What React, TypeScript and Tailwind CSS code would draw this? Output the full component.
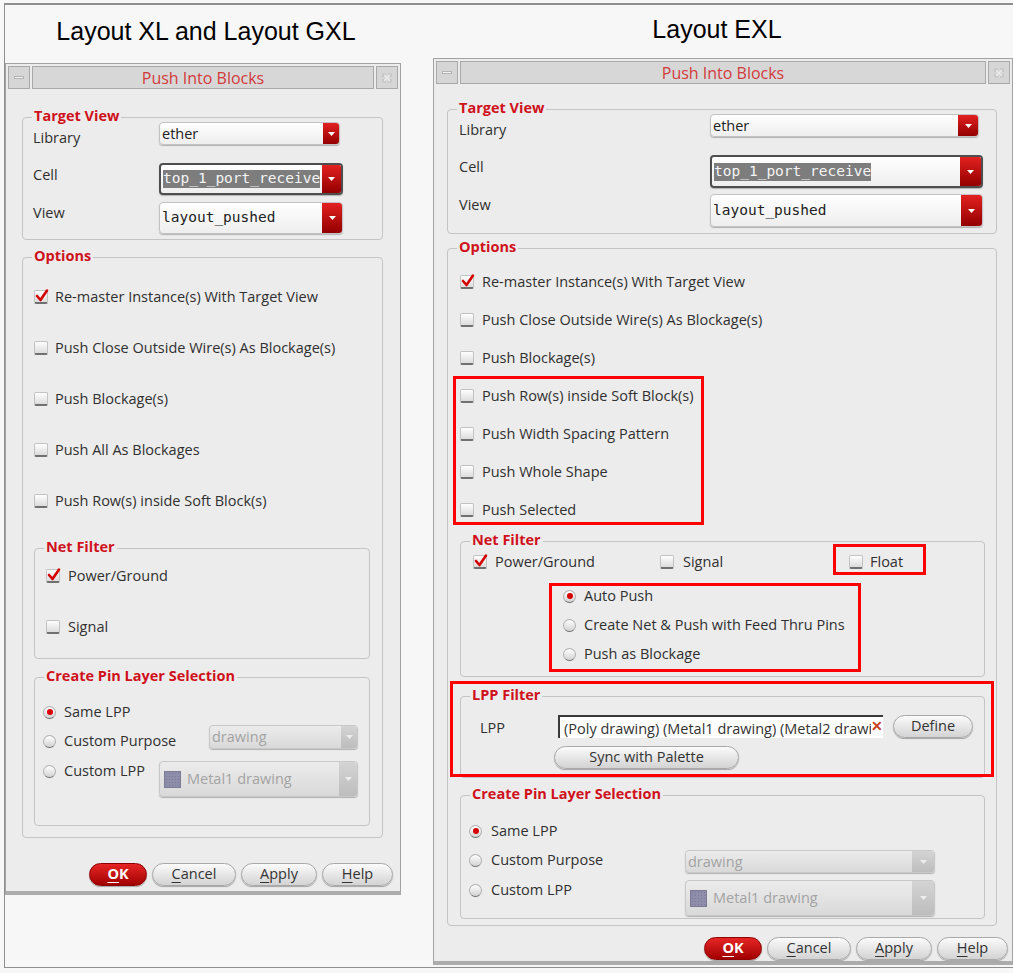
import React from "react";

type Kids = { children?: React.ReactNode };

function Check({ checked = false }: { checked?: boolean }) {
  return (
    <span className="relative block w-[14px] h-[14px] shrink-0 rounded-[2px] border border-[#c2c2c2] border-b-[2px] border-b-[#707070] bg-linear-to-b from-[#fefefe] to-[#dcdcdc]">
      {checked && (
        <svg className="absolute left-[0px] top-[-3px]" width="14" height="15" viewBox="0 0 14 15">
          <path d="M2 8 L5.5 12 L12 2.5" stroke="#d40000" strokeWidth="2.6" fill="none" strokeLinejoin="round" strokeLinecap="round" />
        </svg>
      )}
    </span>
  );
}

function Radio({ on = false }: { on?: boolean }) {
  return (
    <span className="flex w-[13px] h-[13px] shrink-0 rounded-full items-center justify-center border border-[#b0b0b0] border-b-[#6c6c6c] bg-linear-to-b from-white to-[#d2d2d2]">
      {on && <span className="block w-[6px] h-[6px] rounded-full bg-[#d60000]" />}
    </span>
  );
}

function CheckRow({ label, checked = false, gap = "gap-[7px]" }: { label: string; checked?: boolean; gap?: string }) {
  return (
    <div className={`h-[20px] flex items-center ${gap}`}>
      <Check checked={checked} />
      <span className="text-[14.5px] leading-[20px] whitespace-nowrap">{label}</span>
    </div>
  );
}

function RadioRow({ label, on = false, gap = "gap-[8px]" }: { label: string; on?: boolean; gap?: string }) {
  return (
    <div className={`h-[20px] flex items-center ${gap}`}>
      <Radio on={on} />
      <span className="text-[14.5px] leading-[20px] whitespace-nowrap">{label}</span>
    </div>
  );
}

function Arrow({ disabled = false }: { disabled?: boolean }) {
  return (
    <svg width="7" height="4" viewBox="0 0 7 4">
      <path d="M0 0 H7 L3.5 4 Z" fill={disabled ? "#ededed" : "#ffffff"} />
    </svg>
  );
}

function Combo({
  cls,
  btn = "w-[18px]",
  focused = false,
  disabled = false,
  children,
}: {
  cls: string;
  btn?: string;
  focused?: boolean;
  disabled?: boolean;
} & Kids) {
  const border = focused
    ? "border-2 border-[#4e4e4e]"
    : disabled
    ? "border border-[#c8c8c8]"
    : "border border-[#c2c2c2]";
  const bg = disabled ? "bg-linear-to-b from-[#ececec] to-[#d9d9d9]" : "bg-linear-to-b from-white to-[#eeeeee]";
  return (
    <div className={`${cls} ${border} ${bg} shrink-0 flex rounded-[4px] overflow-hidden shadow-[0_1px_1px_rgba(0,0,0,0.25)]`}>
      <div className="flex-1 min-w-0 flex items-center pl-[2px] overflow-hidden whitespace-nowrap">{children}</div>
      <div
        className={`${btn} shrink-0 flex items-center justify-center ${
          disabled ? "bg-linear-to-b from-[#d4d4d4] to-[#bdbdbd]" : "bg-linear-to-b from-[#e42020] to-[#930000]"
        }`}
      >
        <Arrow disabled={disabled} />
      </div>
    </div>
  );
}

function Group({ title, className = "", children }: { title: string; className?: string } & Kids) {
  return (
    <div className={`relative border border-[#c4c4c4] rounded-[4px] ${className}`}>
      <span className="absolute -top-[11px] left-[9px] px-[2px] bg-[#ececec] text-[14.5px] leading-[18px] font-bold text-[#d0111b] whitespace-nowrap">
        {title}
      </span>
      {children}
    </div>
  );
}

function Btn({ w, primary = false, children }: { w: string; primary?: boolean } & Kids) {
  return (
    <div
      className={`${w} h-[23px] shrink-0 rounded-full flex items-center justify-center text-[14.5px] leading-none border shadow-[0_1px_1px_rgba(0,0,0,0.3)] ${
        primary
          ? "border-[#8c0000] bg-linear-to-b from-[#e62424] to-[#a20000] text-white font-bold"
          : "border-[#a8a8a8] bg-linear-to-b from-[#fbfbfb] to-[#d3d3d3] text-[#333]"
      }`}
    >
      {children}
    </div>
  );
}

function U({ children }: Kids) {
  return <span className="underline underline-offset-[3px]">{children}</span>;
}

function Buttons({ cls }: { cls: string }) {
  return (
    <div className={`flex justify-end gap-[5px] ${cls}`}>
      <Btn w="w-[58px]" primary>
        <U>O</U>K
      </Btn>
      <Btn w="w-[84px]">
        <U>C</U>ancel
      </Btn>
      <Btn w="w-[76px]">
        <U>A</U>pply
      </Btn>
      <Btn w="w-[71px]">
        <U>H</U>elp
      </Btn>
    </div>
  );
}

function TitleBar() {
  return (
    <div className="flex gap-[2px] px-[2px] pt-[2px] h-[25px]">
      <div className="w-[22px] h-[23px] border border-[#a9a9a9] bg-[#d6d6d6] flex items-center justify-center">
        <span className="block w-[10px] h-[3px] bg-[#f2f2f2] border border-[#b4b4b4]" />
      </div>
      <div className="flex-1 h-[23px] border border-[#a9a9a9] bg-[#d7d7d7] flex items-center justify-center text-[16px] leading-none text-[#d33a3c]">
        Push Into Blocks
      </div>
      <div className="w-[22px] h-[23px] border border-[#a9a9a9] bg-[#d6d6d6] flex items-center justify-center">
        <svg width="12" height="12" viewBox="0 0 12 12" fill="none" stroke="#ececec" strokeWidth="1.2">
          <path d="M2 2 L10 10 M10 2 L2 10" />
          <path d="M2 5 V2 H5 M7 2 H10 V5 M10 7 V10 H7 M5 10 H2 V7" stroke="#bdbdbd" />
        </svg>
      </div>
    </div>
  );
}

function Dialog({ className = "", bodyCls, children }: { className?: string; bodyCls: string } & Kids) {
  return (
    <div className={`border border-[#a3a3a3] border-b-[4px] border-b-[#acacac] bg-[#ececec] ${className}`}>
      <TitleBar />
      <div className={bodyCls}>{children}</div>
    </div>
  );
}

function Label({ cls, children }: { cls: string } & Kids) {
  return <span className={`${cls} relative shrink-0 h-[20px] text-[14.5px] leading-[20px]`}>{children}</span>;
}

function Mono({ sel = false, children }: { sel?: boolean } & Kids) {
  return (
    <span
      className={`inline-block h-[18px] font-['DejaVu_Sans_Mono',monospace] text-[14.5px] leading-[17px] ${
        sel ? "bg-[#7d7d7d] text-[#f4f4f4]" : "text-[#222]"
      }`}
    >
      {children}
    </span>
  );
}

function Swatch() {
  return (
    <span className="block w-[17px] h-[17px] shrink-0 mr-[6px] ml-[2px] border border-[#7a7a92] bg-[#8e8eab] bg-[radial-gradient(#7a7a98_1px,transparent_1px)] bg-[length:3px_3px]" />
  );
}

function LeftDialog() {
  return (
    <Dialog className="w-[396px]" bodyCls="pl-[16px] pr-[7px] pt-[28px] pb-[5px]">
      <Group title="Target View" className="mr-[10px] pt-[4px] pb-[5px] pl-[10px]">
        <div className="flex items-start">
          <Label cls="w-[126px] top-[6px]">Library</Label>
          <Combo cls="w-[181px] h-[23px]" btn="w-[16px]">
            <span className="text-[14.5px] text-[#222]">ether</span>
          </Combo>
        </div>
        <div className="flex items-start mt-[18px]">
          <Label cls="w-[126px] top-[2px]">Cell</Label>
          <Combo cls="w-[184px] h-[32px]" btn="w-[19px]" focused>
            <Mono sel>top_1_port_receive</Mono>
          </Combo>
        </div>
        <div className="flex items-start mt-[7px]">
          <Label cls="w-[126px] top-[1px]">View</Label>
          <Combo cls="w-[184px] h-[32px]" btn="w-[20px]">
            <Mono>layout_pushed</Mono>
          </Combo>
        </div>
      </Group>

      <Group title="Options" className="mt-[17px] mr-[10px] pt-[29px] pb-[11px]">
        <div className="pl-[11px] flex flex-col gap-[31px]">
          <CheckRow label="Re-master Instance(s) With Target View" checked />
          <CheckRow label="Push Close Outside Wire(s) As Blockage(s)" />
          <CheckRow label="Push Blockage(s)" />
          <CheckRow label="Push All As Blockages" />
          <CheckRow label="Push Row(s) inside Soft Block(s)" />
        </div>

        <Group title="Net Filter" className="mt-[37px] ml-[11px] mr-[12px] pt-[17px] pb-[21px] pl-[11px]">
          <CheckRow label="Power/Ground" checked gap="gap-[8px]" />
          <div className="mt-[31px]">
            <CheckRow label="Signal" gap="gap-[8px]" />
          </div>
        </Group>

        <Group title="Create Pin Layer Selection" className="mt-[18px] ml-[11px] mr-[12px] pt-[24px] pb-[28px] pl-[8px] pr-[11px]">
          <RadioRow label="Same LPP" on />
          <div className="mt-[3px] flex items-start justify-between">
            <div className="relative top-[6px]">
              <RadioRow label="Custom Purpose" />
            </div>
            <Combo cls="w-[149px] h-[24px]" btn="w-[16px]" disabled>
              <span className="text-[14.5px] text-[#a3a3a3]">drawing</span>
            </Combo>
          </div>
          <div className="mt-[12px] flex items-start justify-between">
            <RadioRow label="Custom LPP" />
            <Combo cls="w-[199px] h-[36px]" btn="w-[18px]" disabled>
              <Swatch />
              <span className="text-[14.5px] text-[#a3a3a3]">Metal1 drawing</span>
            </Combo>
          </div>
        </Group>
      </Group>

      <Buttons cls="mt-[25px]" />
    </Dialog>
  );
}

function RightDialog() {
  return (
    <Dialog className="w-[580px]" bodyCls="pl-[13px] pr-[4px] pt-[25px] pb-[1px]">
      <Group title="Target View" className="mr-[11px] pt-[4px] pb-[6px] pl-[11px]">
        <div className="flex items-start">
          <Label cls="w-[251px] top-[6px]">Library</Label>
          <Combo cls="w-[269px] h-[23px]" btn="w-[20px]">
            <span className="text-[14.5px] text-[#222]">ether</span>
          </Combo>
        </div>
        <div className="flex items-start mt-[18px]">
          <Label cls="w-[251px] top-[2px]">Cell</Label>
          <Combo cls="w-[273px] h-[33px]" btn="w-[21px]" focused>
            <Mono sel>top_1_port_receive</Mono>
          </Combo>
        </div>
        <div className="flex items-start mt-[6px]">
          <Label cls="w-[251px] top-[1px]">View</Label>
          <Combo cls="w-[273px] h-[33px]" btn="w-[21px]">
            <Mono>layout_pushed</Mono>
          </Combo>
        </div>
      </Group>

      <Group title="Options" className="mt-[14px] mr-[11px] pt-[23px] pb-[6px]">
        <div className="pl-[12px] flex flex-col gap-[18px]">
          <CheckRow label="Re-master Instance(s) With Target View" checked gap="gap-[8px]" />
          <CheckRow label="Push Close Outside Wire(s) As Blockage(s)" gap="gap-[8px]" />
          <CheckRow label="Push Blockage(s)" gap="gap-[8px]" />
          <div className="relative flex flex-col gap-[18px]">
            <span className="absolute -top-[10px] -left-[7px] w-[251px] h-[149px] border-[3px] border-[#ff0000]" />
            <CheckRow label="Push Row(s) inside Soft Block(s)" gap="gap-[8px]" />
            <CheckRow label="Push Width Spacing Pattern" gap="gap-[8px]" />
            <CheckRow label="Push Whole Shape" gap="gap-[8px]" />
            <CheckRow label="Push Selected" gap="gap-[8px]" />
          </div>
        </div>

        <Group title="Net Filter" className="mt-[21px] ml-[12px] mr-[11px] pt-[10px] pb-[12px] pl-[12px]">
          <div className="flex">
            <div className="w-[187px]">
              <CheckRow label="Power/Ground" checked gap="gap-[8px]" />
            </div>
            <div className="w-[189px]">
              <CheckRow label="Signal" gap="gap-[9px]" />
            </div>
            <div className="relative">
              <span className="absolute -top-[8px] -left-[16px] w-[93px] h-[31px] border-[3px] border-[#ff0000]" />
              <CheckRow label="Float" gap="gap-[7px]" />
            </div>
          </div>
          <div className="relative mt-[14px] ml-[90px] w-[280px] flex flex-col gap-[9px]">
            <span className="absolute -top-[3px] -left-[14px] w-[312px] h-[89px] border-[3px] border-[#ff0000]" />
            <RadioRow label="Auto Push" on />
            <RadioRow label="Create Net & Push with Feed Thru Pins" />
            <RadioRow label="Push as Blockage" />
          </div>
        </Group>

        <Group title="LPP Filter" className="mt-[19px] ml-[12px] mr-[11px] pt-[18px] pb-[8px] pl-[19px]">
          <span className="absolute -top-[16px] -left-[11px] w-[544px] h-[96px] border-[3px] border-[#ff0000]" />
          <div className="flex items-start">
            <Label cls="w-[78px] top-[3px]">LPP</Label>
            <div className="relative w-[325px] h-[23px] bg-white border-t-2 border-l-2 border-[#3a3a3a] flex items-center">
              <div className="w-[312px] overflow-hidden whitespace-nowrap pl-[4px]">
                <span className="text-[14.5px] leading-[18px] text-[#333]">(Poly drawing) (Metal1 drawing) (Metal2 drawing)</span>
              </div>
              <span className="text-[14px] leading-[14px] font-bold text-[#c8401a] -mt-[4px]">✕</span>
            </div>
            <div className="ml-[10px]">
              <Btn w="w-[80px]">Define</Btn>
            </div>
          </div>
          <div className="mt-[8px] ml-[74px]">
            <Btn w="w-[185px]">Sync with Palette</Btn>
          </div>
        </Group>

        <Group title="Create Pin Layer Selection" className="mt-[17px] ml-[12px] mr-[11px] pt-[25px] pb-[2px] pl-[8px] pr-[49px]">
          <RadioRow label="Same LPP" on gap="gap-[9px]" />
          <div className="mt-[9px] flex items-start justify-between">
            <RadioRow label="Custom Purpose" gap="gap-[9px]" />
            <Combo cls="w-[250px] h-[23px]" btn="w-[22px]" disabled>
              <span className="text-[14.5px] text-[#a3a3a3]">drawing</span>
            </Combo>
          </div>
          <div className="mt-[7px] flex items-start justify-between">
            <RadioRow label="Custom LPP" gap="gap-[9px]" />
            <Combo cls="w-[250px] h-[36px]" btn="w-[22px]" disabled>
              <Swatch />
              <span className="text-[14.5px] text-[#a3a3a3]">Metal1 drawing</span>
            </Combo>
          </div>
        </Group>
      </Group>

      <Buttons cls="mt-[11px]" />
    </Dialog>
  );
}

export default function App() {
  return (
    <div className="w-[1013px] h-[973px] bg-[#f7f7f7] pt-[3px] pl-[4px] overflow-hidden font-['Open_Sans',sans-serif] text-[#303030]">
      <div className="h-[965px] w-[1009px] border-t-2 border-l border-b border-[#8f8f8f] flex items-start">
        <div className="w-[396px] flex flex-col">
          <div className="h-[58px] pt-[14px] pl-[6px] text-center font-['Liberation_Sans',Arial,sans-serif] text-[25px] leading-[25px] text-black">
            Layout XL and Layout GXL
          </div>
          <LeftDialog />
        </div>
        <div className="ml-[32px] w-[580px] flex flex-col">
          <div className="h-[53px] pt-[12px] pr-[12px] text-center font-['Liberation_Sans',Arial,sans-serif] text-[25px] leading-[25px] text-black">
            Layout EXL
          </div>
          <RightDialog />
        </div>
      </div>
    </div>
  );
}
